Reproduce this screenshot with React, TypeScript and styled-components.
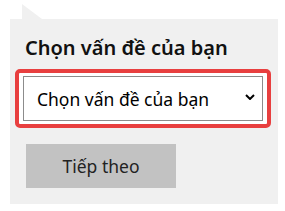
import styled, { createGlobalStyle } from "styled-components";

const GlobalStyle = createGlobalStyle`
  html, body {
    margin: 0;
    background: #ffffff;
    font-family: "Noto Sans", "Liberation Sans", sans-serif;
  }
`;

const App = () => {
  return (
    <Wrapper>
      <GlobalStyle />
      <Tail />
      <Panel>
        <Heading>Chọn vấn đề của bạn</Heading>
        <Highlight>
          <Select defaultValue="">
            <option value="">Chọn vấn đề của bạn</option>
          </Select>
          <Chevron viewBox="0 0 10 6" aria-hidden="true">
            <path d="M1 1 L5 5 L9 1" />
          </Chevron>
        </Highlight>
        <NextButton disabled>Tiếp theo</NextButton>
      </Panel>
    </Wrapper>
  );
};

export default App;

const Wrapper = styled.div`
  padding: 4px 0 0 10px;
  display: flex;
  flex-direction: column;
  align-items: flex-start;
`;

const Tail = styled.div`
  width: 20px;
  height: 15px;
  margin-left: 12px;
  background: #f0f0f0;
  clip-path: polygon(0 0, 100% 100%, 0 100%);
`;

const Panel = styled.div`
  width: 268px;
  height: 185px;
  box-sizing: border-box;
  background: #f0f0f0;
  padding: 15px 5px 0;
  display: flex;
  flex-direction: column;
  align-items: flex-start;
`;

const Heading = styled.h2`
  margin: 0 0 0 10px;
  font-size: 20px;
  line-height: 28px;
  font-weight: 600;
  color: #111111;
`;

const Highlight = styled.div`
  position: relative;
  margin-top: 7px;
  width: 256px;
  box-sizing: border-box;
  border: 4px solid #e83f3f;
  border-radius: 5px;
  background: #ffffff;
  padding: 3px 4px;
`;

const Select = styled.select`
  appearance: none;
  display: block;
  width: 100%;
  height: 45px;
  box-sizing: border-box;
  border: 1px solid #8c8c8c;
  border-radius: 0;
  background: #ffffff;
  padding: 0 30px 0 13px;
  font-family: "Noto Sans", "Liberation Sans", sans-serif;
  font-size: 17.5px;
  color: #000000;
`;

const Chevron = styled.svg`
  position: absolute;
  right: 12px;
  top: 21px;
  width: 10px;
  height: 6px;
  fill: none;
  stroke: #000000;
  stroke-width: 2;
  pointer-events: none;
`;

const NextButton = styled.button`
  margin: 16px 0 0 11px;
  width: 150px;
  height: 44px;
  border: none;
  background: #c2c2c2;
  font-family: "Noto Sans", "Liberation Sans", sans-serif;
  font-size: 17.5px;
  color: #222222;
  padding: 0;
`;
